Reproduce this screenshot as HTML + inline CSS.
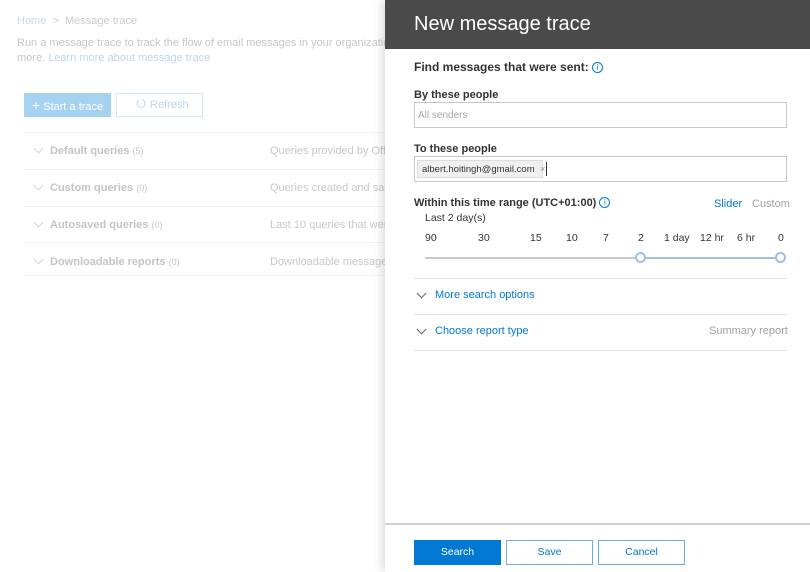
<!DOCTYPE html>
<html><head><meta charset="utf-8"><style>
*{margin:0;padding:0;box-sizing:border-box}
body{width:810px;height:572px;overflow:hidden;background:#fff;font-family:"Liberation Sans",sans-serif;position:relative}
.a{position:absolute;white-space:nowrap}
.l{color:#c8c8c8;font-size:11px}
.row{position:absolute;left:24px;width:370px;border-top:1px solid #f2f2f2}
.blue{color:#0078d4}
.lab{font-size:11px;font-weight:bold;color:#333}
.chev{position:absolute;width:7px;height:7px;border-right:1px solid #666;border-bottom:1px solid #666;transform:rotate(45deg)}
.lc{position:absolute;left:35px;width:7px;height:7px;border-right:1px solid #d6d6d6;border-bottom:1px solid #d6d6d6;transform:rotate(45deg)}
.info{font-weight:normal;display:inline-block;width:11px;height:11px;border:1px solid #0078d4;border-radius:50%;font-size:8px;text-align:center;line-height:9px;vertical-align:1px}
</style></head><body>
<div class="a l" style="left:17px;top:15px;color:#c8d8ea">Home <span style="color:#ccc">&nbsp;&gt;&nbsp; Message trace</span></div>
<div class="a l" style="left:17px;top:37px;font-size:11px;color:#c6c6c6">Run a message trace to track the flow of email messages in your organization. This</div>
<div class="a l" style="left:17px;top:52px;font-size:11px;color:#c6c6c6">more. <span style="color:#b8d6f0">Learn more about message trace</span></div>
<div class="a" style="left:24px;top:93px;width:87px;height:24px;background:#a6d2f2;color:#fff;font-size:11px;line-height:24px;padding-left:8px"><span style="font-size:14px">+</span> Start a trace</div>
<div class="a" style="left:116px;top:93px;width:87px;height:24px;border:1px solid #d3e7f8;color:#b8d8f2;font-size:11px;line-height:22px;padding-left:19px"><svg width="11" height="11" viewBox="0 0 11 11" style="vertical-align:-1px"><path d="M3 2A4 4 0 1 0 6 1.5" fill="none" stroke="#b8d8f2" stroke-width="1"/></svg> Refresh</div>
<div class="row" style="top:132px"></div><div class="row" style="top:169px"></div><div class="row" style="top:206px"></div><div class="row" style="top:242px"></div><div class="row" style="top:275px"></div>
<div class="a l" style="left:50px;top:145px;color:#c4c4c4"><b>Default queries</b> <span style="font-size:9px">(5)</span></div>
<div class="a l" style="left:50px;top:182px;color:#c4c4c4"><b>Custom queries</b> <span style="font-size:9px">(0)</span></div>
<div class="a l" style="left:50px;top:219px;color:#c4c4c4"><b>Autosaved queries</b> <span style="font-size:9px">(0)</span></div>
<div class="a l" style="left:50px;top:256px;color:#c4c4c4"><b>Downloadable reports</b> <span style="font-size:9px">(0)</span></div>
<div class="a l" style="left:270px;top:145px">Queries provided by Offic</div>
<div class="a l" style="left:270px;top:182px">Queries created and saved</div>
<div class="a l" style="left:270px;top:219px">Last 10 queries that were</div>
<div class="a l" style="left:270px;top:256px">Downloadable message tr</div>
<div class="lc" style="top:145px"></div><div class="lc" style="top:182px"></div><div class="lc" style="top:219px"></div><div class="lc" style="top:256px"></div>

<div class="a" style="left:385px;top:0;width:425px;height:572px;background:#fff;box-shadow:-4px 0 8px rgba(0,0,0,.12)"></div>
<div class="a" style="left:385px;top:0;width:425px;height:49px;background:#4a4a4a;color:#fff;font-size:20px;padding:13px 0 0 29px">New message trace</div>
<div class="a" style="left:414px;top:60px;font-size:12px;font-weight:bold;color:#333">Find messages that were sent: <span class="blue info">i</span></div>
<div class="a lab" style="left:414px;top:89px">By these people</div>
<div class="a" style="left:414px;top:102px;width:373px;height:26px;border:1px solid #c8c8c8;font-size:10px;color:#a6a6a6;padding:7px 3px">All senders</div>
<div class="a lab" style="left:414px;top:143px">To these people</div>
<div class="a" style="left:414px;top:156px;width:373px;height:26px;border:1px solid #c8c8c8"></div>
<div class="a" style="left:417px;top:160px;width:126px;height:18px;background:#f0f0f0;border:1px solid #ddd;font-size:9.5px;color:#333;padding:3px 4px">albert.hoitingh@gmail.com&nbsp; <span style="color:#999">×</span></div>
<div class="a" style="left:546px;top:162px;width:1px;height:14px;background:#333"></div>
<div class="a lab" style="left:414px;top:197px">Within this time range (UTC+01:00) <span class="blue info">i</span></div>
<div class="a blue" style="left:714px;top:198px;font-size:11px">Slider</div>
<div class="a" style="left:752px;top:198px;font-size:11px;color:#a0a0a0">Custom</div>
<div class="a" style="left:425px;top:212px;font-size:10.5px;color:#333">Last 2 day(s)</div>
<div style="font-size:10.5px;color:#333">
<div class="a" style="left:425px;top:232px">90</div><div class="a" style="left:478px;top:232px">30</div><div class="a" style="left:530px;top:232px">15</div><div class="a" style="left:566px;top:232px">10</div><div class="a" style="left:603px;top:232px">7</div><div class="a" style="left:638px;top:232px">2</div><div class="a" style="left:664px;top:232px">1 day</div><div class="a" style="left:700px;top:232px">12 hr</div><div class="a" style="left:737px;top:232px">6 hr</div><div class="a" style="left:778px;top:232px">0</div></div>
<div class="a" style="left:425px;top:257px;width:216px;height:2px;background:#c8c8c8"></div>
<div class="a" style="left:641px;top:257px;width:140px;height:2px;background:#a3bde3"></div>
<div class="a" style="left:635px;top:252px;width:11px;height:11px;border:2px solid #a3bde3;border-radius:50%;background:#fff"></div>
<div class="a" style="left:775px;top:252px;width:11px;height:11px;border:2px solid #a3bde3;border-radius:50%;background:#fff"></div>
<div class="a" style="left:414px;top:278px;width:373px;border-top:1px solid #e1e1e1"></div>
<div class="chev" style="left:418px;top:290px"></div>
<div class="a blue" style="left:435px;top:289px;font-size:11px">More search options</div>
<div class="a" style="left:414px;top:314px;width:373px;border-top:1px solid #e1e1e1"></div>
<div class="chev" style="left:418px;top:326px"></div>
<div class="a blue" style="left:435px;top:325px;font-size:11px">Choose report type</div>
<div class="a" style="left:709px;top:325px;font-size:11px;color:#a0a0a0">Summary report</div>
<div class="a" style="left:414px;top:350px;width:373px;border-top:1px solid #e1e1e1"></div>
<div class="a" style="left:385px;top:523px;width:425px;border-top:2px solid #d0d0d0"></div>
<div class="a" style="left:414px;top:540px;width:87px;height:25px;background:#0078d4;color:#fff;font-size:10.5px;text-align:center;line-height:25px">Search</div>
<div class="a" style="left:506px;top:540px;width:87px;height:25px;border:1px solid #69afe5;color:#0078d4;font-size:10.5px;text-align:center;line-height:23px">Save</div>
<div class="a" style="left:598px;top:540px;width:87px;height:25px;border:1px solid #69afe5;color:#0078d4;font-size:10.5px;text-align:center;line-height:23px">Cancel</div>
</body></html>
